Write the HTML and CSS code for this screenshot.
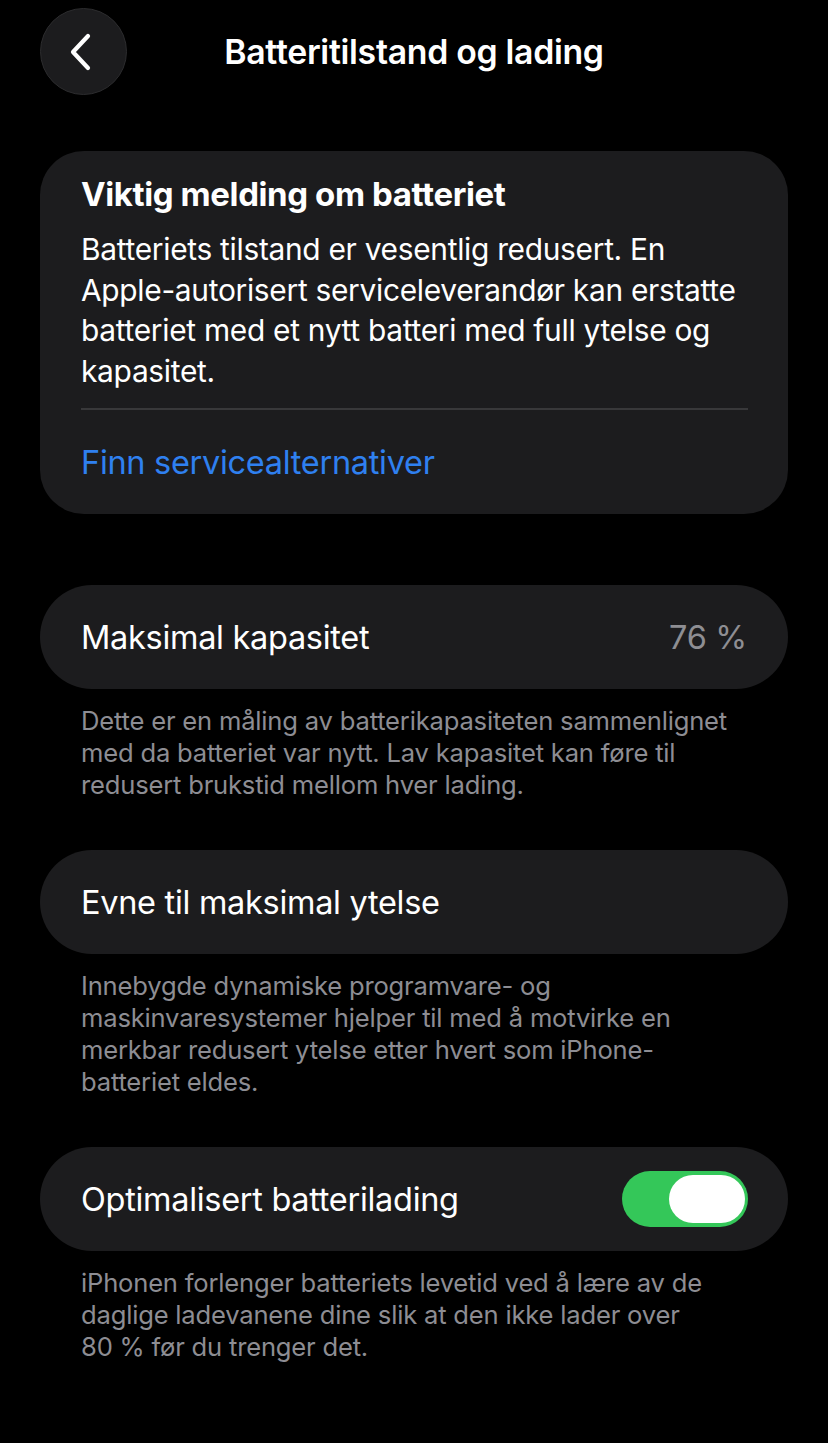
FILE: index.html
```html
<!DOCTYPE html>
<html lang="no">
<head>
<meta charset="utf-8">
<title>Batteritilstand og lading</title>
<link rel="stylesheet" href="styles.css">
</head>
<body>
<div class="screen">
  <header class="nav">
    <div class="nav-left">
      <button class="back" aria-label="Tilbake">
        <svg width="28" height="40" viewBox="0 0 28 40"><path d="M21 4 L6 20 L21 36" fill="none" stroke="#ffffff" stroke-width="4.2" stroke-linecap="round" stroke-linejoin="round"/></svg>
      </button>
    </div>
    <h1 class="title">Batteritilstand og lading</h1>
    <div class="nav-right"></div>
  </header>

  <main class="content">
    <section class="card notice">
      <h2 class="notice-title">Viktig melding om batteriet</h2>
      <p class="notice-body">Batteriets tilstand er vesentlig redusert. En Apple-autorisert serviceleverandør kan erstatte batteriet med et nytt batteri med full ytelse og kapasitet.</p>
      <div class="sep"></div>
      <a class="link" href="#">Finn servicealternativer</a>
    </section>

    <section class="group first">
      <div class="pill">
        <span class="label">Maksimal kapasitet</span>
        <span class="value">76&nbsp;%</span>
      </div>
      <p class="footnote">Dette er en måling av batterikapasiteten sammenlignet med da batteriet var nytt. Lav kapasitet kan føre til redusert brukstid mellom hver lading.</p>
    </section>

    <section class="group">
      <div class="pill">
        <span class="label">Evne til maksimal ytelse</span>
      </div>
      <p class="footnote">Innebygde dynamiske programvare- og maskinvaresystemer hjelper til med å motvirke en merkbar redusert ytelse etter hvert som iPhone-batteriet eldes.</p>
    </section>

    <section class="group">
      <div class="pill">
        <span class="label">Optimalisert batterilading</span>
        <span class="toggle"><span class="knob"></span></span>
      </div>
      <p class="footnote">iPhonen forlenger batteriets levetid ved å lære av de daglige ladevanene dine slik at den ikke lader over 80&nbsp;% før du trenger det.</p>
    </section>
  </main>
</div>
</body>
</html>
```
FILE: styles.css
```css
* { box-sizing: border-box; }
html, body {
  margin: 0;
  padding: 0;
  background: #000000;
}
body {
  font-family: Inter, "Liberation Sans", sans-serif;
  color: #ffffff;
  width: 828px;
  min-height: 1443px;
}
.screen {
  display: flex;
  flex-direction: column;
}
.nav {
  display: grid;
  grid-template-columns: 1fr auto 1fr;
  align-items: center;
  padding: 8px 40px 0 40px;
  height: 102px;
  align-content: start;
}
.nav-left { display: flex; }
.back {
  width: 87px;
  height: 87px;
  border-radius: 50%;
  background: #1c1c1e;
  border: 1px solid #2c2c2e;
  display: flex;
  align-items: center;
  justify-content: center;
  padding: 0 6px 0 0;
  cursor: pointer;
}
.title {
  margin: 0;
  font-size: 33.8px;
  font-weight: 600;
  letter-spacing: -0.3px;
  text-align: center;
}
.content {
  display: flex;
  flex-direction: column;
  padding: 49px 40px 0 40px;
}
.card {
  background: #1c1c1e;
  border-radius: 44px;
}
.notice {
  padding: 24px 40px 31px 41px;
  display: flex;
  flex-direction: column;
}
.notice-title {
  margin: 0 0 16px 0;
  font-size: 33px;
  font-weight: 700;
  line-height: 38px;
  letter-spacing: -0.4px;
}
.notice-body {
  margin: 0;
  font-size: 29.9px;
  line-height: 40.5px;
  letter-spacing: -0.3px;
  color: #ffffff;
}
.sep {
  height: 2px;
  background: #38383a;
  margin: 17px 0 33px 0;
}
.link {
  color: #2f80f0;
  text-decoration: none;
  font-size: 32.5px;
  line-height: 40px;
  letter-spacing: -0.3px;
}
.group {
  display: flex;
  flex-direction: column;
  margin-top: 49px;
}
.group.first { margin-top: 71px; }
.pill {
  background: #1c1c1e;
  border-radius: 52px;
  height: 104px;
  display: flex;
  align-items: center;
  justify-content: space-between;
  padding: 0 41px;
}
.label {
  font-size: 32.5px;
  letter-spacing: -0.3px;
}
.value {
  font-size: 32.5px;
  color: #8e8e93;
  letter-spacing: -0.3px;
}
.toggle {
  width: 126px;
  height: 56px;
  border-radius: 28px;
  background: #34c759;
  display: flex;
  align-items: center;
  justify-content: flex-end;
  padding: 0 3px;
  margin-right: -1px;
}
.knob {
  width: 76px;
  height: 48px;
  border-radius: 24px;
  background: #ffffff;
}
.footnote {
  margin: 16px 0 0 0;
  padding: 0 45px 0 41px;
  font-size: 25.6px;
  line-height: 32px;
  color: #8d8d93;
  letter-spacing: -0.2px;
}
```
